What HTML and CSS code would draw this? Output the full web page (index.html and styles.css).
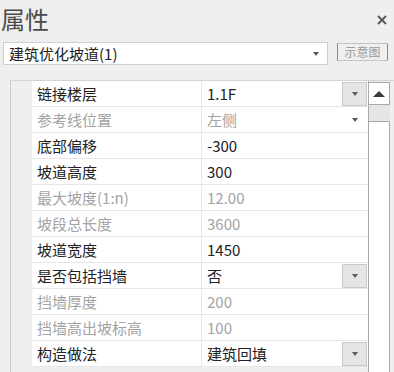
FILE: index.html
```html
<!DOCTYPE html>
<html lang="zh-CN">
<head>
    <meta charset="UTF-8">
    <title>属性</title>
    <link rel="stylesheet" href="styles.css">
</head>
<body>

    <div class="panel-head">
        <h1 class="title">属性</h1>
        <svg class="close" width="10" height="10" viewBox="0 0 10 10">
            <path d="M1 1 L9 9 M9 1 L1 9" stroke="#555" stroke-width="1.8" fill="none"/>
        </svg>
    </div>

    <div class="type-row">
        <div class="type-select">
            <span>建筑优化坡道(1)</span>
            <i class="caret"></i>
        </div>
        <div class="preview-btn">示意图</div>
    </div>

    <div class="grid">
        <div class="rows">
            <div class="row">
                <div class="cell name">链接楼层</div>
                <div class="cell value">1.1F<span class="drop-btn"><i class="caret"></i></span></div>
            </div>
            <div class="row off">
                <div class="cell name">参考线位置</div>
                <div class="cell value">左侧<span class="drop-plain"><i class="caret"></i></span></div>
            </div>
            <div class="row">
                <div class="cell name">底部偏移</div>
                <div class="cell value">-300</div>
            </div>
            <div class="row">
                <div class="cell name">坡道高度</div>
                <div class="cell value">300</div>
            </div>
            <div class="row off">
                <div class="cell name">最大坡度(1:n)</div>
                <div class="cell value">12.00</div>
            </div>
            <div class="row off">
                <div class="cell name">坡段总长度</div>
                <div class="cell value">3600</div>
            </div>
            <div class="row">
                <div class="cell name">坡道宽度</div>
                <div class="cell value">1450</div>
            </div>
            <div class="row">
                <div class="cell name">是否包括挡墙</div>
                <div class="cell value">否<span class="drop-btn"><i class="caret"></i></span></div>
            </div>
            <div class="row off">
                <div class="cell name">挡墙厚度</div>
                <div class="cell value">200</div>
            </div>
            <div class="row off">
                <div class="cell name">挡墙高出坡标高</div>
                <div class="cell value">100</div>
            </div>
            <div class="row">
                <div class="cell name">构造做法</div>
                <div class="cell value">建筑回填<span class="drop-btn"><i class="caret"></i></span></div>
            </div>
        </div>

        <div class="scrollbar">
            <div class="scroll-up"><i></i></div>
            <div class="scroll-track">
                <div class="scroll-thumb"></div>
            </div>
        </div>
    </div>

</body>
</html>
```

FILE: styles.css
```css
body {
    margin: 0;
    height: 100vh;
    background-color: #efefef;
    font-family: "Noto Sans CJK SC", sans-serif;
    color: #222;
    overflow: hidden;
}

/* Header */
.panel-head {
    display: flex;
    justify-content: space-between;
    align-items: center;
    height: 38px;
    padding: 0 7px 0 1px;
}

.title {
    margin: 0;
    font-size: 24px;
    font-weight: normal;
    color: #4a4a4a;
    line-height: 38px;
}

.close {
    margin-top: 2px;
}

/* Type selector */
.type-row {
    display: flex;
    align-items: flex-start;
    margin-top: 4px;
    padding-left: 3px;
}

.type-select {
    display: flex;
    justify-content: space-between;
    align-items: center;
    box-sizing: border-box;
    width: 325px;
    height: 23px;
    padding: 0 8px 0 5px;
    background-color: #fff;
    border: 1px solid #cfcfcf;
    font-size: 15px;
    color: #222;
}

.preview-btn {
    box-sizing: border-box;
    width: 51px;
    height: 18px;
    margin: 1px 0 0 9px;
    border: 1px solid #c4c4c4;
    border-left-color: #8c8c8c;
    border-right-color: #8c8c8c;
    font-size: 12px;
    line-height: 16px;
    text-align: center;
    color: #9a9a9a;
}

.caret {
    display: block;
    width: 0;
    height: 0;
    border-left: 3px solid transparent;
    border-right: 3px solid transparent;
    border-top: 4px solid #5a5a5a;
}

/* Property grid */
.grid {
    display: flex;
    margin: 15px 0 0 10px;
    border-left: 1px solid #cbcbcb;
    border-top: 1px solid #d4d4d4;
}

.rows {
    width: 357px;
    padding: 0 0 5px 21px;
    box-sizing: border-box;
}

.row {
    display: flex;
    height: 26px;
    font-size: 15px;
}

.row.off {
    color: #a3a3a3;
}

.cell {
    display: flex;
    align-items: center;
    box-sizing: border-box;
    background-color: #fff;
    border-bottom: 1px solid #e6e6e6;
}

.name {
    width: 169px;
    padding-left: 5px;
}

.value {
    flex: 1;
    justify-content: space-between;
    padding-left: 5px;
    border-left: 1px solid #e6e6e6;
}

.drop-btn {
    display: flex;
    align-items: center;
    justify-content: center;
    box-sizing: border-box;
    width: 25px;
    height: 24px;
    margin-right: 1px;
    background-color: #e5e5e5;
    border: 1px solid #c9c9c9;
}

.drop-plain {
    display: flex;
    justify-content: center;
    width: 25px;
    margin-right: 1px;
}

/* Scrollbar */
.scrollbar {
    display: flex;
    flex-direction: column;
    width: 22px;
    border-left: 1px solid #a9a9a9;
    box-sizing: border-box;
}

.scroll-up {
    display: flex;
    align-items: center;
    justify-content: center;
    height: 21px;
    margin-top: 1px;
    background-color: #fff;
    border: 1px solid #a9a9a9;
    border-left: none;
}

.scroll-up i {
    width: 0;
    height: 0;
    border-left: 6px solid transparent;
    border-right: 6px solid transparent;
    border-bottom: 6px solid #3a3a3a;
}

.scroll-track {
    display: flex;
    flex-direction: column;
    flex: 1;
    padding-top: 16px;
    background-color: #e6e6e6;
}

.scroll-thumb {
    flex: 1;
    background-color: #fff;
    border: 1px solid #a9a9a9;
    border-left: none;
    border-bottom: none;
}
```
